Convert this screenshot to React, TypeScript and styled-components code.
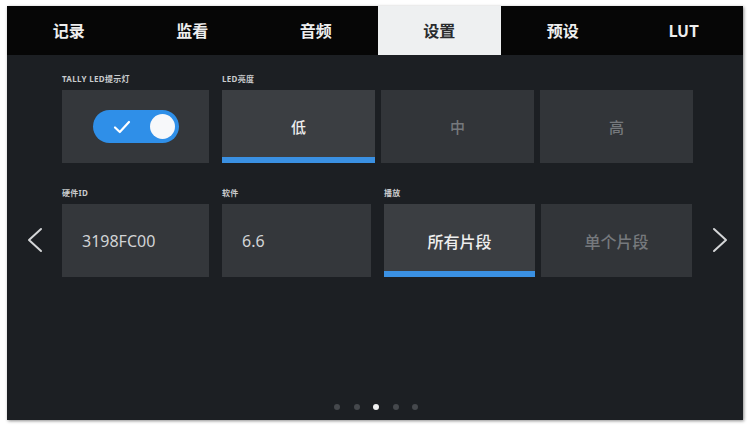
import React from 'react'
import styled, { createGlobalStyle } from 'styled-components'

const GlobalStyle = createGlobalStyle`
  html, body {
    margin: 0;
    padding: 0;
    background: #ffffff;
  }
  body {
    font-family: "Noto Sans", "Noto Sans CJK SC", sans-serif;
  }
`

const tabs = ['记录', '监看', '音频', '设置', '预设', 'LUT']

export default function App() {
  return (
    <>
      <GlobalStyle />
      <Page>
        <Screen>
          <TabBar>
            {tabs.map((t, i) => (
              <Tab key={t} $active={i === 3}>
                {t}
              </Tab>
            ))}
          </TabBar>
          <Content>
            <Row>
              <Side />
              <Group $width={147}>
                <FieldLabel>TALLY LED提示灯</FieldLabel>
                <Cards>
                  <Card>
                    <Toggle>
                      <CheckIcon />
                      <Knob />
                    </Toggle>
                  </Card>
                </Cards>
              </Group>
              <Group $width={471}>
                <FieldLabel>LED亮度</FieldLabel>
                <Cards>
                  <Option $selected>低</Option>
                  <Option>中</Option>
                  <Option>高</Option>
                </Cards>
              </Group>
              <Side $right />
            </Row>
            <Row>
              <Side>
                <Chevron dir="left" />
              </Side>
              <Group $width={147}>
                <FieldLabel>硬件ID</FieldLabel>
                <Cards>
                  <Value>3198FC00</Value>
                </Cards>
              </Group>
              <Group $width={149}>
                <FieldLabel>软件</FieldLabel>
                <Cards>
                  <Value>6.6</Value>
                </Cards>
              </Group>
              <Group $width={308}>
                <FieldLabel>播放</FieldLabel>
                <Cards>
                  <Option $selected $big>所有片段</Option>
                  <Option $big>单个片段</Option>
                </Cards>
              </Group>
              <Side $right>
                <Chevron dir="right" />
              </Side>
            </Row>
            <Dots>
              {[0, 1, 2, 3, 4].map((i) => (
                <Dot key={i} $active={i === 2} />
              ))}
            </Dots>
          </Content>
        </Screen>
      </Page>
    </>
  )
}

const CheckIcon = () => (
  <svg width="18" height="14" viewBox="0 0 18 14" fill="none">
    <path d="M2 7.5 L6.8 12 L16 2" stroke="#ffffff" strokeWidth="2.2" strokeLinecap="round" strokeLinejoin="round" />
  </svg>
)

const Chevron = ({ dir }: { dir: 'left' | 'right' }) => (
  <svg width="18" height="26" viewBox="0 0 18 26" fill="none">
    <path
      d={dir === 'left' ? 'M15 2 L3 13 L15 24' : 'M3 2 L15 13 L3 24'}
      stroke="#d4d6d8"
      strokeWidth="2"
      strokeLinecap="round"
      strokeLinejoin="round"
    />
  </svg>
)

const Page = styled.div`
  width: 751px;
  height: 426px;
  padding: 6px 0 0 7px;
  box-sizing: border-box;
`

const Screen = styled.div`
  width: 736px;
  height: 414px;
  background: #1c1f23;
  display: flex;
  flex-direction: column;
  box-shadow: 1px 1px 3px rgba(0, 0, 0, 0.45);
  overflow: hidden;
`

const TabBar = styled.div`
  height: 49px;
  background: #060606;
  display: grid;
  grid-template-columns: repeat(5, 123.5px) 1fr;
  flex-shrink: 0;
`

const Tab = styled.div<{ $active?: boolean }>`
  display: flex;
  align-items: center;
  justify-content: center;
  font-family: "Noto Sans CJK SC", "Noto Sans", sans-serif;
  font-size: 16px;
  font-weight: 700;
  color: ${(p) => (p.$active ? '#2a2c2e' : '#eeeeee')};
  background: ${(p) => (p.$active ? '#eef0f1' : 'transparent')};
  padding-bottom: 2px;
`

const Content = styled.div`
  flex: 1;
  display: flex;
  flex-direction: column;
  padding-top: 18px;
`

const Row = styled.div`
  display: flex;
  gap: 13px;
  margin-bottom: 24px;
`

const Side = styled.div<{ $right?: boolean }>`
  flex-shrink: 0;
  width: ${(p) => (p.$right ? '50px' : '55px')};
  margin: ${(p) => (p.$right ? '0 0 0 -13px' : '0 -13px 0 0')};
  display: flex;
  align-items: flex-end;
  justify-content: center;
  padding-bottom: 24px;
  padding-left: ${(p) => (p.$right ? '6px' : '0')};
  box-sizing: border-box;
`

const Group = styled.div<{ $width: number }>`
  flex-shrink: 0;
  width: ${(p) => p.$width}px;
  display: flex;
  flex-direction: column;
`

const FieldLabel = styled.div`
  height: 12px;
  line-height: 12px;
  font-family: "Noto Sans", "Noto Sans CJK SC", sans-serif;
  font-size: 8px;
  font-weight: 700;
  letter-spacing: 0.3px;
  color: #c9cbcd;
  margin-bottom: 5px;
  white-space: nowrap;
`

const Cards = styled.div`
  display: flex;
  gap: 6px;
  height: 73px;
`

const Card = styled.div`
  flex: 1;
  background: #34373b;
  display: flex;
  align-items: center;
  justify-content: center;
`

const Option = styled.div<{ $selected?: boolean; $big?: boolean }>`
  flex: 1;
  display: flex;
  align-items: center;
  justify-content: center;
  background: ${(p) => (p.$selected ? '#3b3e42' : '#323539')};
  border-bottom: 6px solid ${(p) => (p.$selected ? '#3a90e2' : 'transparent')};
  box-sizing: border-box;
  padding-top: 6px;
  font-family: "Noto Sans CJK SC", "Noto Sans", sans-serif;
  font-size: ${(p) => (p.$big ? '16px' : '15px')};
  font-weight: 500;
  color: ${(p) => (p.$selected ? '#eeeeee' : '#76797d')};
`

const Value = styled.div`
  flex: 1;
  display: flex;
  align-items: center;
  padding-left: 20px;
  background: #34373b;
  font-family: "Noto Sans", sans-serif;
  font-size: 16px;
  color: #d2d4d6;
`

const Toggle = styled.div`
  width: 86px;
  height: 33px;
  border-radius: 17px;
  background: #2f8fe8;
  display: flex;
  align-items: center;
  justify-content: space-between;
  padding: 0 4px 0 20px;
  box-sizing: border-box;
`

const Knob = styled.div`
  width: 25px;
  height: 25px;
  border-radius: 50%;
  background: #f7f8fa;
`

const Dots = styled.div`
  margin-top: auto;
  display: flex;
  justify-content: center;
  gap: 13.5px;
  padding: 0 0 10px 2px;
`

const Dot = styled.div<{ $active?: boolean }>`
  width: 6px;
  height: 6px;
  border-radius: 50%;
  background: ${(p) => (p.$active ? '#f2f2f2' : '#45484c')};
`
